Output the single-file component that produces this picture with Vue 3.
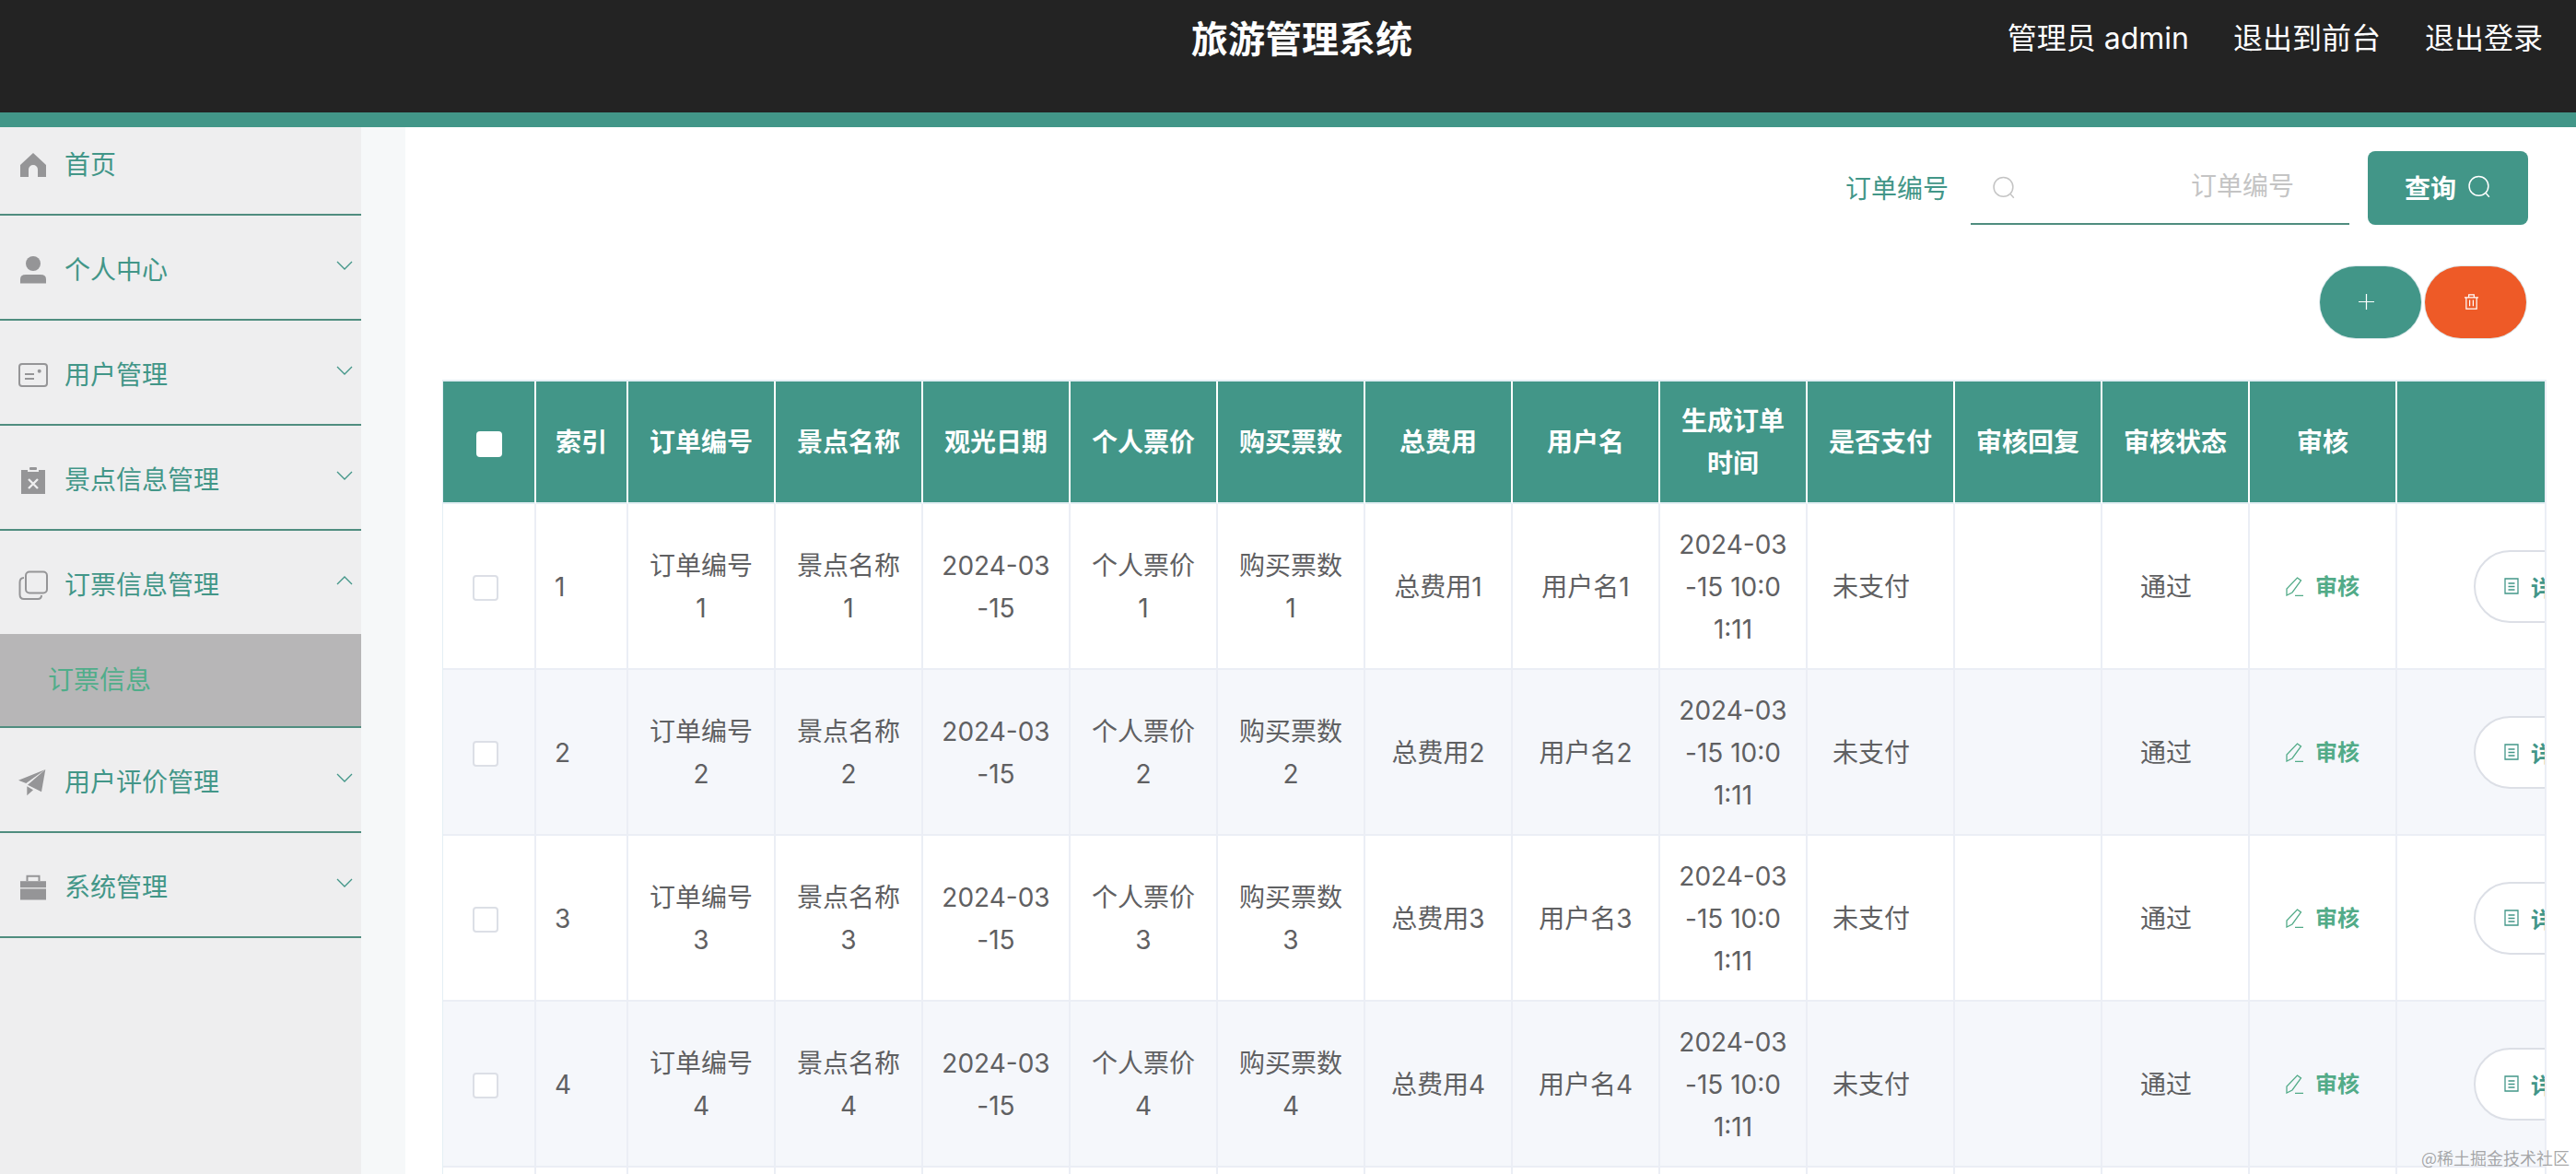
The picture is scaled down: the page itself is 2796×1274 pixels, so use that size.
<script setup>
const menus = [
  { name: '首页', icon: 'home' },
  { name: '个人中心', icon: 'person', arrow: true },
  { name: '用户管理', icon: 'card', arrow: true },
  { name: '景点信息管理', icon: 'clipboard', arrow: true },
  { name: '订票信息管理', icon: 'copy', arrow: true, open: true, children: ['订票信息'] },
  { name: '用户评价管理', icon: 'plane', arrow: true },
  { name: '系统管理', icon: 'case', arrow: true },
]

const columns = [
  { label: '订单编号', key: 'orderNo' },
  { label: '景点名称', key: 'spot' },
  { label: '观光日期', key: 'date' },
  { label: '个人票价', key: 'price' },
  { label: '购买票数', key: 'count' },
  { label: '总费用', key: 'total' },
  { label: '用户名', key: 'user' },
  { label: '生成订单时间', key: 'created' },
  { label: '是否支付', key: 'paid', shift: true },
  { label: '审核回复', key: 'reply' },
  { label: '审核状态', key: 'status', shift: true },
]

const rows = [1, 2, 3, 4, 5].map((n) => ({
  id: n,
  orderNo: '订单编号' + n,
  spot: '景点名称' + n,
  date: '2024-03-15',
  price: '个人票价' + n,
  count: '购买票数' + n,
  total: '总费用' + n,
  user: '用户名' + n,
  created: '2024-03-15 10:01:11',
  paid: '未支付',
  reply: '',
  status: '通过',
}))
</script>

<template>
  <div class="app">
    <header class="topbar">
      <h1 class="title">旅游管理系统</h1>
      <div class="top-links">
        <span>管理员 admin</span>
        <span>退出到前台</span>
        <span>退出登录</span>
      </div>
    </header>

    <div class="body">
      <aside class="side">
        <ul class="menu">
          <li v-for="m in menus" :key="m.name" class="menu-item">
            <div class="menu-head" :class="{ 'menu-head--open': m.open }">
              <svg class="menu-icon" viewBox="0 0 32 32">
                <path v-if="m.icon === 'home'" class="solid" d="M16 3 30 16V29H21V21a5 5 0 0 0-10 0V29H2V16Z" />
                <g v-else-if="m.icon === 'person'" class="solid">
                  <circle cx="16" cy="9" r="8" />
                  <path d="M2 30.5V26q0-5 6-5H24q6 0 6 5V30.5Z" />
                </g>
                <g v-else-if="m.icon === 'card'" class="line">
                  <rect x="1" y="4" width="30" height="24" rx="3" />
                  <path d="M7 15H17M7 20H17" />
                  <circle class="solid" cx="22.7" cy="11.7" r="2" />
                </g>
                <g v-else-if="m.icon === 'clipboard'">
                  <path class="solid" d="M3 5H10V7H22V5H29V31H3Z" />
                  <rect class="solid" x="12" y="2" width="8" height="3" rx="1" />
                  <path class="cross" d="M11 15 21 25M21 15 11 25" />
                </g>
                <g v-else-if="m.icon === 'copy'" class="line">
                  <rect x="8" y="1.5" width="23" height="23" rx="4" />
                  <path d="M6 8Q1.5 8 1.5 13V26Q1.5 31 6 31H21Q25 31 25 27" />
                </g>
                <g v-else-if="m.icon === 'plane'" class="solid">
                  <path d="M29.3 2 0 13.7 8.3 17Z" />
                  <path d="M29.3 2 10 18.7 25 26.3Z" />
                  <path d="M9.3 20.3V30.3L16 24.3Z" />
                </g>
                <g v-else>
                  <rect class="solid" x="2" y="9.2" width="28" height="7" />
                  <rect class="solid" x="2" y="17.5" width="28" height="12" />
                  <path class="line" d="M9.5 9V3.7H22.5V9" />
                </g>
              </svg>
              <span class="menu-name">{{ m.name }}</span>
              <svg v-if="m.arrow" class="chevron" :class="{ 'chevron--up': m.open }" viewBox="0 0 18 10">
                <path d="M1 1 9 9 17 1" />
              </svg>
            </div>
            <div v-for="c in m.children" :key="c" class="submenu">{{ c }}</div>
          </li>
        </ul>
      </aside>
      <div class="gutter"></div>

      <main class="main">
        <div class="search-row">
          <label class="search-label">订单编号</label>
          <div class="search-box">
            <svg class="search-icon" viewBox="0 0 24 24">
              <circle cx="11.5" cy="11" r="9.6" />
              <path d="M18.5 18 22 22" />
            </svg>
            <input class="search-input" type="text" placeholder="订单编号" />
          </div>
          <button class="query-btn">
            <span>查询</span>
            <svg viewBox="0 0 24 24">
              <circle cx="11.5" cy="11" r="9.6" />
              <path d="M18.5 18 22 22" />
            </svg>
          </button>
        </div>

        <div class="action-row">
          <button class="round-btn round-btn--add">
            <svg viewBox="0 0 18 18"><path d="M9 0V18M0 9H18" /></svg>
          </button>
          <button class="round-btn round-btn--del">
            <svg viewBox="0 0 18 18">
              <path d="M1 4H17M6 4V1H12V4M3 4V17H15V4M7 7V14M11 7V14" />
            </svg>
          </button>
        </div>

        <div class="table-wrap">
          <table class="grid">
            <colgroup>
              <col class="col-check" />
              <col class="col-index" />
              <col v-for="c in columns" :key="c.key" class="col-data" />
              <col class="col-data" />
              <col class="col-ops" />
            </colgroup>
            <thead>
              <tr>
                <th><span class="check check--head"></span></th>
                <th>索引</th>
                <th v-for="c in columns" :key="c.key">{{ c.label }}</th>
                <th>审核</th>
                <th></th>
              </tr>
            </thead>
            <tbody>
              <tr v-for="r in rows" :key="r.id">
                <td class="cell-check"><span class="check"></span></td>
                <td class="cell-index">{{ r.id }}</td>
                <td v-for="c in columns" :key="c.key" :class="{ 'cell-shift': c.shift }">{{ r[c.key] }}</td>
                <td>
                  <span class="audit">
                    <svg viewBox="0 0 20 21"><path d="M12.5 1 16.5 4 7 17 1 20V13ZM10 20.4H19" /></svg>
                    审核
                  </span>
                </td>
                <td class="cell-ops">
                  <button class="detail-btn">
                    <svg viewBox="0 0 16 18"><path d="M1 1H15V17H1ZM4.5 6H11.5M4.5 9.5H11.5M4.5 13H11.5" /></svg>
                    详情
                  </button>
                </td>
              </tr>
            </tbody>
          </table>
        </div>
      </main>
    </div>

    <div class="watermark">@稀土掘金技术社区</div>
  </div>
</template>

<style scoped>
.app {
  position: relative;
  width: 2796px;
  height: 1274px;
  overflow: hidden;
  display: flex;
  flex-direction: column;
  background: #fff;
  font-family: "Liberation Sans", "Noto Sans CJK SC", sans-serif;
}

.topbar {
  flex: none;
  box-sizing: border-box;
  height: 138px;
  display: flex;
  justify-content: space-between;
  padding: 0 36px 0 1293px;
  background: #232323;
  border-bottom: 16px solid #429688;
  color: #fff;
}

.title {
  margin: 0;
  font-family: "Noto Sans CJK SC", sans-serif;
  font-size: 40px;
  font-weight: 700;
  line-height: 80px;
}

.top-links {
  display: flex;
  gap: 48px;
  font-family: Inter, "Noto Sans CJK SC", sans-serif;
  font-size: 32px;
  line-height: 84px;
}

.body {
  flex: 1;
  display: flex;
  min-height: 0;
}

.side {
  flex: none;
  width: 392px;
  overflow: hidden;
  background: #eeeeef;
}

.gutter {
  flex: none;
  width: 48px;
  background: #f6f8f9;
}

.menu {
  list-style: none;
  margin: -18px 0 0;
  padding: 0;
}

.menu-item {
  border-bottom: 2px solid #4f8d7f;
}

.menu-head {
  box-sizing: border-box;
  height: 112px;
  display: flex;
  align-items: center;
  padding: 5px 9px 0 20px;
}

.menu-icon {
  flex: none;
  width: 32px;
  height: 32px;
  margin-right: 18px;
}

.solid {
  fill: #959597;
  stroke: none;
}

.line {
  fill: none;
  stroke: #959597;
  stroke-width: 2;
}

.cross {
  fill: none;
  stroke: #eeeeef;
  stroke-width: 2.4;
}

.menu-name {
  flex: 1;
  margin-top: -3px;
  font-size: 28px;
  color: #429688;
}

.chevron {
  flex: none;
  width: 18px;
  height: 10px;
  margin-top: -10px;
  fill: none;
  stroke: #429688;
  stroke-width: 1.3;
}

.chevron--up {
  transform: rotate(180deg);
}

.submenu {
  height: 100px;
  line-height: 102px;
  padding-left: 52px;
  background: #b7b6b7;
  font-size: 28px;
  color: #50ad8a;
}

.main {
  flex: 1;
  min-width: 0;
  padding: 26px 32px 0 40px;
}

.search-row {
  display: flex;
  align-items: stretch;
  justify-content: flex-end;
  height: 80px;
  padding-right: 20px;
}

.search-label {
  align-self: center;
  margin-right: 24px;
  margin-top: -3px;
  font-size: 28px;
  color: #429688;
}

.search-box {
  position: relative;
  width: 411px;
}

.search-icon {
  position: absolute;
  left: 23px;
  top: 27px;
  width: 26px;
  height: 26px;
  fill: none;
  stroke: #c4c4c4;
  stroke-width: 1.4;
}

.search-input {
  box-sizing: border-box;
  width: 100%;
  height: 100%;
  padding: 0 60px 0 0;
  border: 0;
  border-bottom: 2px solid #4f8d7f;
  outline: none;
  background: transparent;
  text-align: right;
  font-family: inherit;
  font-size: 28px;
}

.search-input::placeholder {
  color: #c4c4c4;
}

.query-btn {
  width: 174px;
  margin-left: 20px;
  padding: 0 0 2px;
  display: flex;
  align-items: center;
  justify-content: center;
  gap: 12px;
  border: 0;
  border-radius: 8px;
  background: #429688;
  color: #fff;
  font-family: inherit;
  font-size: 28px;
  font-weight: 700;
}

.query-btn svg {
  width: 26px;
  height: 26px;
  fill: none;
  stroke: #fff;
  stroke-width: 1.4;
}

.action-row {
  display: flex;
  justify-content: flex-end;
  gap: 4px;
  margin-top: 45px;
  padding-right: 22px;
}

.round-btn {
  width: 110px;
  height: 78px;
  padding: 0 10px 2px 0;
  display: flex;
  align-items: center;
  justify-content: center;
  border: 0;
  border-radius: 39px;
  box-shadow: 0 0 0 1px #dfe9ec;
}

.round-btn svg {
  width: 17px;
  height: 17px;
  fill: none;
  stroke: #fff;
  stroke-width: 1.3;
}

.round-btn--add {
  background: #429688;
}

.round-btn--del {
  background: #ee5a27;
}

.table-wrap {
  margin-top: 45px;
  overflow: hidden;
  border-top: 2px solid #e4eff4;
  border-left: 1px solid #e4eff4;
  border-right: 2px solid #ebeef5;
}

.grid {
  table-layout: fixed;
  width: 2421px;
  border-collapse: separate;
  border-spacing: 0;
  font-family: Inter, "Noto Sans CJK SC", sans-serif;
}

.col-check {
  width: 101px;
}

.col-index {
  width: 100px;
}

.col-data {
  width: 160px;
}

.col-ops {
  width: 300px;
}

th,
td {
  box-sizing: border-box;
  border-right: 2px solid #ebeef5;
  border-bottom: 2px solid #ebeef5;
  padding: 0 20px;
  text-align: center;
  line-height: 46px;
  font-size: 28px;
  word-break: break-all;
}

th {
  height: 133px;
  background: #429688;
  border-right-color: #fff;
  border-bottom-color: #e4eff4;
  color: #fff;
  font-weight: 700;
}

td {
  height: 180px;
  padding-top: 2px;
  color: #5f6062;
}

tbody tr:nth-child(even) td {
  background: #f5f7fb;
}

.cell-index {
  text-align: left;
}

.cell-shift {
  padding-right: 40px;
}

.cell-check {
  padding: 0 8px 0 0;
}

.check {
  box-sizing: border-box;
  display: inline-block;
  width: 28px;
  height: 28px;
  vertical-align: middle;
  border: 2px solid #dcdfe6;
  border-radius: 4px;
  background: #fff;
}

.check--head {
  border-color: #fff;
}

.audit {
  display: inline-flex;
  align-items: center;
  gap: 12px;
  font-size: 24px;
  font-weight: 700;
  color: #52ab88;
  white-space: nowrap;
}

.audit svg {
  width: 20px;
  height: 21px;
  fill: none;
  stroke: #52ab88;
  stroke-width: 1.3;
}

.cell-ops {
  padding: 0 0 0 83px;
  text-align: left;
}

.detail-btn {
  display: inline-flex;
  align-items: center;
  gap: 13px;
  width: 170px;
  height: 79px;
  padding: 0 0 0 31px;
  border: 2px solid #dcdfe6;
  border-radius: 40px;
  background: #fff;
  color: #429688;
  font-family: inherit;
  font-size: 24px;
  font-weight: 700;
  white-space: nowrap;
}

.detail-btn svg {
  width: 16px;
  height: 18px;
  fill: none;
  stroke: #429688;
  stroke-width: 1.3;
}

.watermark {
  position: absolute;
  right: 7px;
  bottom: 4px;
  font-family: "Noto Sans CJK SC", sans-serif;
  font-size: 18px;
  line-height: 28px;
  color: rgba(110, 110, 110, 0.6);
}
</style>
